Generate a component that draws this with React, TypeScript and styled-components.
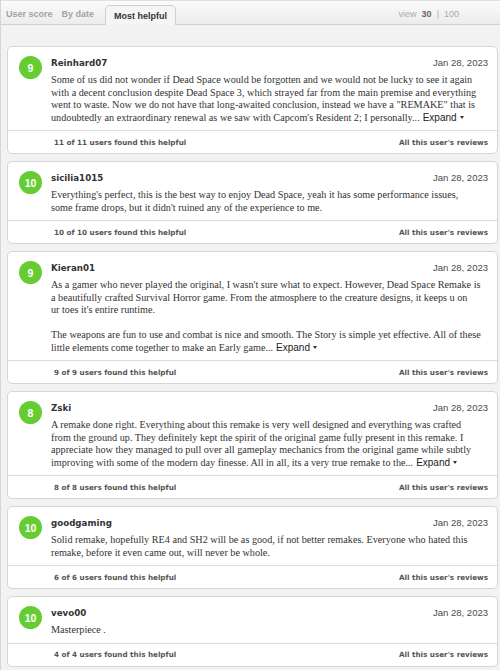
import React from 'react';
import styled, { createGlobalStyle } from 'styled-components';

type Review = {
    score: number;
    user: string;
    date: string;
    // each paragraph is kept as the lines shown in the listing
    paragraphs: string[][];
    expand?: boolean;
    helpful: string;
};

const reviews: Review[] = [
    {
        score: 9,
        user: 'Reinhard07',
        date: 'Jan 28, 2023',
        paragraphs: [
            [
                'Some of us did not wonder if Dead Space would be forgotten and we would not be lucky to see it again',
                'with a decent conclusion despite Dead Space 3, which strayed far from the main premise and everything',
                'went to waste. Now we do not have that long-awaited conclusion, instead we have a "REMAKE" that is',
                "undoubtedly an extraordinary renewal as we saw with Capcom's Resident 2; I personally...",
            ],
        ],
        expand: true,
        helpful: '11 of 11 users found this helpful',
    },
    {
        score: 10,
        user: 'sicilia1015',
        date: 'Jan 28, 2023',
        paragraphs: [
            [
                "Everything's perfect, this is the best way to enjoy Dead Space, yeah it has some performance issues,",
                "some frame drops, but it didn't ruined any of the experience to me.",
            ],
        ],
        helpful: '10 of 10 users found this helpful',
    },
    {
        score: 9,
        user: 'Kieran01',
        date: 'Jan 28, 2023',
        paragraphs: [
            [
                "As a gamer who never played the original, I wasn't sure what to expect. However, Dead Space Remake is",
                'a beautifully crafted Survival Horror game. From the atmosphere to the creature designs, it keeps u on',
                "ur toes it's entire runtime.",
            ],
            [
                'The weapons are fun to use and combat is nice and smooth. The Story is simple yet effective. All of these',
                'little elements come together to make an Early game...',
            ],
        ],
        expand: true,
        helpful: '9 of 9 users found this helpful',
    },
    {
        score: 8,
        user: 'Zski',
        date: 'Jan 28, 2023',
        paragraphs: [
            [
                'A remake done right. Everything about this remake is very well designed and everything was crafted',
                'from the ground up. They definitely kept the spirit of the original game fully present in this remake. I',
                'appreciate how they managed to pull over all gameplay mechanics from the original game while subtly',
                'improving with some of the modern day finesse. All in all, its a very true remake to the...',
            ],
        ],
        expand: true,
        helpful: '8 of 8 users found this helpful',
    },
    {
        score: 10,
        user: 'goodgaming',
        date: 'Jan 28, 2023',
        paragraphs: [
            [
                'Solid remake, hopefully RE4 and SH2 will be as good, if not better remakes. Everyone who hated this',
                'remake, before it even came out, will never be whole.',
            ],
        ],
        helpful: '6 of 6 users found this helpful',
    },
    {
        score: 10,
        user: 'vevo00',
        date: 'Jan 28, 2023',
        paragraphs: [['Masterpiece .']],
        helpful: '4 of 4 users found this helpful',
    },
];

const GlobalStyle = createGlobalStyle`
  html, body { margin: 0; padding: 0; background: #f2f2f2; }
  body { font-family: "Liberation Sans", Arial, sans-serif; }
`;

const Page = styled.div`
  width: 500px;
  height: 670px;
  overflow: hidden;
  background: #f2f2f2;
  border-left: 1px solid #d6d6d6;
  box-sizing: border-box;
`;

const TabBar = styled.div`
  display: flex;
  align-items: flex-end;
  justify-content: space-between;
  height: 25px;
  box-sizing: border-box;
  padding: 0 41px 0 5px;
  background: linear-gradient(#fbfbfb, #ececec);
  border-top: 1px solid #e0e0e0;
  border-bottom: 1px solid #d0d0d0;
`;

const Tabs = styled.div`
  display: flex;
  align-items: flex-end;
  gap: 9px;
`;

const Tab = styled.div<{ $active?: boolean }>`
  font-size: 9px;
  font-weight: bold;
  color: ${(p) => (p.$active ? '#333' : '#a3a3a3')};
  height: ${(p) => (p.$active ? '19px' : '17px')};
  line-height: ${(p) => (p.$active ? '20px' : '14px')};
  padding: ${(p) => (p.$active ? '0 8px' : '0')};
  margin-left: ${(p) => (p.$active ? '2px' : '0')};
  margin-bottom: ${(p) => (p.$active ? '-1px' : '0')};
  background: ${(p) => (p.$active ? '#f5f5f5' : 'transparent')};
  border: ${(p) => (p.$active ? '1px solid #d0d0d0' : 'none')};
  border-bottom: none;
  border-radius: 5px 5px 0 0;
`;

const ViewCount = styled.div`
  font-size: 9px;
  color: #aaa;
  height: 17px;
  line-height: 14px;
  display: flex;
  gap: 5px;

  b { color: #666; }
`;

const List = styled.div`
  display: flex;
  flex-direction: column;
  gap: 7px;
  padding: 21px 2px 0 6px;
`;

const Card = styled.div`
  background: #fff;
  border: 1px solid #d6d6d6;
  border-radius: 5px;
`;

const CardBody = styled.div`
  display: flex;
  gap: 9px;
  padding: 8px 9px 6px 11px;
`;

const Badge = styled.div`
  flex: none;
  width: 23px;
  height: 23px;
  border-radius: 50%;
  background: #66cc33;
  color: #fff;
  font-size: 10.5px;
  font-weight: bold;
  display: flex;
  align-items: center;
  justify-content: center;
  margin-top: 1px;
`;

const Main = styled.div`
  flex: 1;
  min-width: 0;
`;

const Head = styled.div`
  display: flex;
  justify-content: space-between;
  align-items: center;
  height: 15px;
  margin-bottom: 4px;
`;

const UserName = styled.span`
  font-family: "DejaVu Sans", Verdana, sans-serif;
  font-size: 8.7px;
  font-weight: bold;
  color: #333;
`;

const DateText = styled.span`
  font-size: 9.5px;
  color: #4a4a4a;
`;

const Text = styled.p`
  margin: 0 0 12.5px;
  font-family: "Liberation Serif", "Times New Roman", serif;
  font-size: 10.2px;
  line-height: 12.5px;
  white-space: nowrap;
  color: #333;

  &:last-child { margin-bottom: 0; }
`;

const Expand = styled.span`
  font-family: "Liberation Sans", Arial, sans-serif;
  font-size: 10px;
  color: #222;
  margin-left: 3px;

  &::after {
    content: '';
    display: inline-block;
    margin-left: 3px;
    vertical-align: 2px;
    border-left: 2px solid transparent;
    border-right: 2px solid transparent;
    border-top: 3px solid #333;
  }
`;

const Footer = styled.div`
  display: flex;
  justify-content: space-between;
  align-items: center;
  height: 22px;
  padding: 0 9px 0 46px;
  border-top: 1px solid #dcdcdc;
  font-family: "DejaVu Sans", Verdana, sans-serif;
  font-size: 7.2px;
  font-weight: bold;
  color: #555;
`;

const App = () => {
    return (
        <>
            <GlobalStyle />
            <Page>
                <TabBar>
                    <Tabs>
                        <Tab>User score</Tab>
                        <Tab>By date</Tab>
                        <Tab $active>Most helpful</Tab>
                    </Tabs>
                    <ViewCount>
                        <span>view</span>
                        <b>30</b>
                        <span>|</span>
                        <span>100</span>
                    </ViewCount>
                </TabBar>
                <List>
                    {reviews.map((r) => (
                        <Card key={r.user}>
                            <CardBody>
                                <Badge>{r.score}</Badge>
                                <Main>
                                    <Head>
                                        <UserName>{r.user}</UserName>
                                        <DateText>{r.date}</DateText>
                                    </Head>
                                    {r.paragraphs.map((lines, i) => (
                                        <Text key={i}>
                                            {lines.map((l, j) => (
                                                <React.Fragment key={j}>
                                                    {j > 0 && <br />}
                                                    {l}
                                                </React.Fragment>
                                            ))}
                                            {r.expand && i === r.paragraphs.length - 1 && <Expand>Expand</Expand>}
                                        </Text>
                                    ))}
                                </Main>
                            </CardBody>
                            <Footer>
                                <span>{r.helpful}</span>
                                <span>All this user's reviews</span>
                            </Footer>
                        </Card>
                    ))}
                </List>
            </Page>
        </>
    );
};

export default App;
